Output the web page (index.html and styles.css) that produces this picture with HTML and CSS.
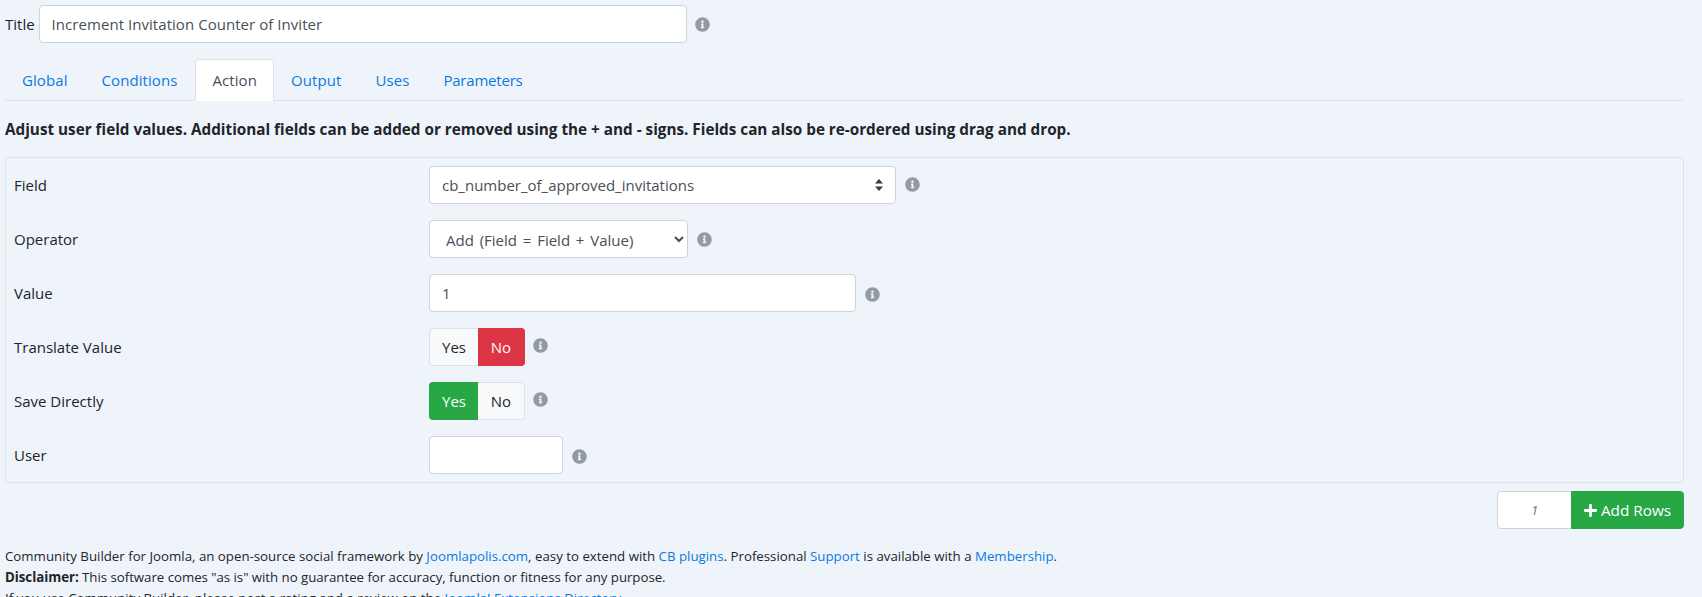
FILE: index.html
```html
<!DOCTYPE html>
<html lang="en">
<head>
<meta charset="utf-8">
<title>Increment Invitation Counter of Inviter</title>
<link rel="stylesheet" href="styles.css">
</head>
<body>
<svg class="defs" width="0" height="0" aria-hidden="true">
  <symbol id="info" viewBox="0 0 512 512"><path d="M256 8C119.043 8 8 119.083 8 256c0 136.997 111.043 248 248 248s248-111.003 248-248C504 119.083 392.957 8 256 8zm0 110c23.196 0 42 18.804 42 42s-18.804 42-42 42-42-18.804-42-42 18.804-42 42-42zm56 254c0 6.627-5.373 12-12 12h-88c-6.627 0-12-5.373-12-12v-24c0-6.627 5.373-12 12-12h12v-64h-12c-6.627 0-12-5.373-12-12v-24c0-6.627 5.373-12 12-12h64c6.627 0 12 5.373 12 12v100h12c6.627 0 12 5.373 12 12v24z"/></symbol>
</svg>
<main class="page">
  <div class="title-row">
    <label class="title-label">Title</label>
    <input class="input title-input" type="text" value="Increment Invitation Counter of Inviter">
    <svg class="info"><use href="#info"/></svg>
  </div>
  <nav class="tabs">
    <a class="tab">Global</a>
    <a class="tab">Conditions</a>
    <a class="tab active">Action</a>
    <a class="tab">Output</a>
    <a class="tab">Uses</a>
    <a class="tab tab-tight">Parameters</a>
  </nav>
  <p class="desc">Adjust user field values. Additional fields can be added or removed using the + and - signs. Fields can also be re-ordered using drag and drop.</p>
  <section class="panel">
    <div class="row">
      <span class="label">Field</span>
      <div class="fake-select"><span>cb_number_of_approved_invitations</span>
        <svg class="updown" viewBox="0 0 8 12"><path d="M4 0 8 4.6H0zM4 12 0 7.4h8z"/></svg>
      </div>
      <svg class="info up1"><use href="#info"/></svg>
    </div>
    <div class="row">
      <span class="label">Operator</span>
      <select class="input op-select"><option>Add (Field = Field + Value)</option></select>
      <svg class="info"><use href="#info"/></svg>
    </div>
    <div class="row">
      <span class="label">Value</span>
      <input class="input value-input" type="text" value="1">
      <svg class="info down1"><use href="#info"/></svg>
    </div>
    <div class="row">
      <span class="label">Translate Value</span>
      <div class="toggle"><span class="opt">Yes</span><span class="opt no-on">No</span></div>
      <svg class="info up2 near"><use href="#info"/></svg>
    </div>
    <div class="row">
      <span class="label">Save Directly</span>
      <div class="toggle"><span class="opt yes-on">Yes</span><span class="opt">No</span></div>
      <svg class="info up2 near"><use href="#info"/></svg>
    </div>
    <div class="row">
      <span class="label">User</span>
      <input class="input user-input" type="text">
      <svg class="info down1"><use href="#info"/></svg>
    </div>
  </section>
  <div class="add-row">
    <input class="input count-input" type="text" placeholder="1">
    <button class="add-btn" type="button"><svg class="plus" viewBox="0 0 448 512"><path d="M416 208H272V64c0-17.67-14.33-32-32-32h-32c-17.67 0-32 14.33-32 32v144H32c-17.67 0-32 14.33-32 32v32c0 17.67 14.33 32 32 32h144v144c0 17.67 14.33 32 32 32h32c17.67 0 32-14.33 32-32V304h144c17.67 0 32-14.33 32-32v-32c0-17.67-14.33-32-32-32z"/></svg>Add Rows</button>
  </div>
  <footer class="foot">
    <div>Community Builder for Joomla, an open-source social framework by <a>Joomlapolis.com</a>, easy to extend with <a>CB plugins</a>. Professional <a>Support</a> is available with a <a>Membership</a>.</div>
    <div class="foot-tight"><strong>Disclaimer:</strong> This software comes "as is" with no guarantee for accuracy, function or fitness for any purpose.</div>
    <div>If you use Community Builder, please post a rating and a review on the <a>Joomla! Extensions Directory</a>.</div>
  </footer>
</main>
</body>
</html>
```
FILE: styles.css
```css
* { box-sizing: border-box; }
html, body { margin: 0; height: 597px; overflow: hidden; }
body {
  background: #eff4fb;
  color: #212529;
  font-family: "Open Sans", "Noto Sans", sans-serif;
  font-size: 15px;
  line-height: 24px;
}
.defs { position: absolute; }
.page { padding: 5px 18px 0 5px; }
.title-row { display: flex; align-items: center; gap: 4px; }
.title-label { font-size: 15px; }
.input {
  height: 38px;
  border: 1px solid #ced4da;
  border-radius: 4px;
  background: #fff;
  color: #495057;
  font-family: inherit;
  font-size: 15px;
  padding: 6px 12px;
  outline: none;
}
.title-input { width: 648px; letter-spacing: .05px; }
.info { width: 15px; height: 15px; margin-left: 9px; fill: #939aa1; flex: none; }
.title-row .info { margin-left: 4px; }
.up1 { margin-top: -2px; }
.up2 { margin-top: -4px; }
.down1 { margin-top: 2px; }
.near { margin-left: 8px; }
.tabs { display: flex; margin-top: 16px; border-bottom: 1px solid #dee2e6; height: 42px; letter-spacing: .08px; }
.tab {
  padding: 8px 16px;
  height: 42px;
  color: #0b7ae0;
  border: 1px solid transparent;
  border-radius: 4px 4px 0 0;
}
.tab.active { margin-left: 1px; background: #fff; color: #495057; border-color: #dee2e6 #dee2e6 #fff; }
.tab-tight { letter-spacing: -.2px; }
.desc { margin: 16px 0; font-weight: 700; font-size: 15.28px; }
.panel {
  border: 1px solid #dee2e6;
  border-radius: 4px;
  padding: 8px;
  display: flex;
  flex-direction: column;
  gap: 16px;
}
.row { display: flex; align-items: center; height: 38px; }
.label { width: 415px; flex: none; }
.fake-select {
  width: 467px;
  height: 38px;
  display: flex;
  align-items: center;
  justify-content: space-between;
  border: 1px solid #ced4da;
  border-radius: 4px;
  background: #fff;
  color: #495057;
  padding: 0 12px;
}
.updown { width: 8px; height: 12px; fill: #343a40; }
.op-select { width: 259px; padding: 7px 12px 5px; word-spacing: 1.9px; }
.value-input { width: 427px; }
.user-input { width: 134px; }
.toggle { display: flex; height: 38px; width: 96px; }
.opt {
  text-align: center;
  line-height: 36px;
  border: 1px solid #dee2e6;
  background: #f8f9fa;
  color: #212529;
}
.opt:first-child { width: 49px; border-radius: 4px 0 0 4px; border-right: 0; }
.opt:last-child { width: 47px; border-radius: 0 4px 4px 0; border-left: 0; }
.no-on { background: #dc3545; border-color: #dc3545; color: #fff; }
.yes-on { background: #28a745; border-color: #28a745; color: #fff; }
.add-row { display: flex; justify-content: flex-end; margin-top: 8px; }
.count-input {
  width: 74px;
  border-radius: 4px 0 0 4px;
  border-right: 0;
  text-align: center;
  font-style: italic;
  font-size: 13px;
}
.count-input::placeholder { color: #6c757d; }
.add-btn {
  height: 38px;
  width: 113px;
  border: 1px solid #28a745;
  border-radius: 0 4px 4px 0;
  background: #28a745;
  color: #fff;
  font-family: inherit;
  font-size: 15.3px;
  padding: 0;
  display: flex;
  align-items: center;
  justify-content: center;
  gap: 4px;
}
.plus { width: 13px; height: 15px; fill: #fff; }
.foot { margin-top: 16px; font-size: 13.27px; line-height: 21px; padding-top: 1px; }
.foot-tight { letter-spacing: -.035px; }
.foot a, .foot a:visited { color: #0b7ae0; }
```
